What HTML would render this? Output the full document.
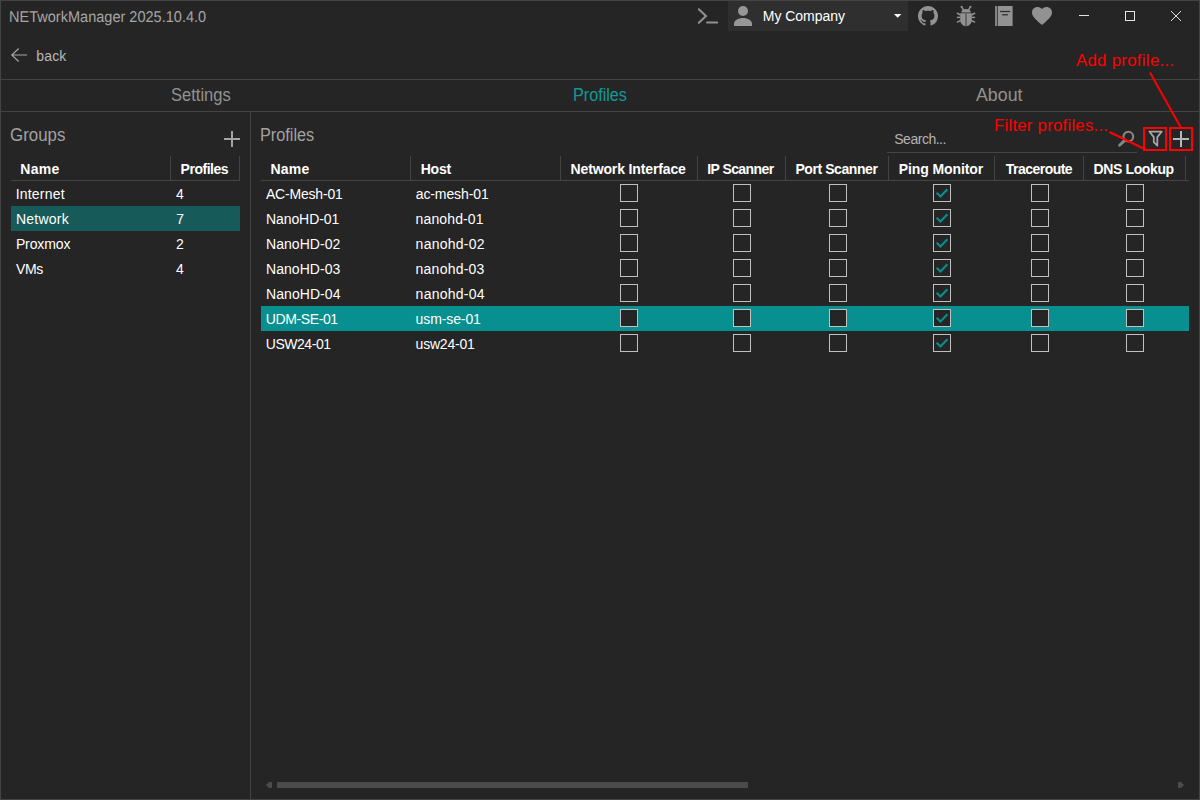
<!DOCTYPE html>
<html>
<head>
<meta charset="utf-8">
<title>NETworkManager</title>
<style>
html,body{margin:0;padding:0;}
body{width:1200px;height:800px;overflow:hidden;background:#252525;font-family:"Liberation Sans",sans-serif;color:#fff;position:relative;}
#win{position:absolute;left:0;top:0;width:1198px;height:798px;border:1px solid #444;background:#252525;}
.t{position:absolute;white-space:nowrap;line-height:20px;height:20px;}
.hl{position:absolute;height:1px;background:#444;}
.vl{position:absolute;width:1px;background:#444;}
.cb{position:absolute;width:16px;height:16px;border:1px solid #c0c0c0;background:#252525;}
.ck{position:absolute;}
svg{position:absolute;overflow:visible;}
</style>
</head>
<body>
<div id="win"></div>

<!-- title bar -->
<div class="t" style="left:8.73px;top:8px;font-size:15.6px;text-rendering:geometricPrecision;transform:scaleX(0.9320);transform-origin:0 0;color:#a6a6a6">NETworkManager 2025.10.4.0</div>
<svg style="left:697px;top:7px" width="22" height="18" viewBox="0 0 22 18"><path d="M1.8 2.2 L9 9 L1.8 15.8" fill="none" stroke="#929292" stroke-width="2" stroke-linecap="round" stroke-linejoin="miter"/><path d="M10 15.5 H20.2" fill="none" stroke="#929292" stroke-width="2" stroke-linecap="round"/></svg>
<div style="position:absolute;left:728px;top:1px;width:180px;height:30px;background:#2f2f2f"></div>
<svg style="left:733px;top:5px" width="20" height="22" viewBox="0 0 20 22"><circle cx="10" cy="6" r="5" fill="#979797"/><path d="M1 21 V19 C1 15.5 5 13 10 13 C15 13 19 15.5 19 19 V21 Z" fill="#979797"/></svg>
<div class="t" style="left:762.78px;top:6px;font-size:14px;letter-spacing:-0.027px;color:#ffffff">My Company</div>
<svg style="left:894px;top:14px" width="8" height="5" viewBox="0 0 8 5"><path d="M0 0 H7.4 L3.7 3.8 Z" fill="#ffffff"/></svg>
<svg style="left:918px;top:6px" width="20" height="20" viewBox="0 0 16 16"><path fill="#929292" d="M8 0C3.58 0 0 3.58 0 8c0 3.54 2.29 6.53 5.47 7.59.4.07.55-.17.55-.38 0-.19-.01-.82-.01-1.49-2.01.37-2.53-.49-2.69-.94-.09-.23-.48-.94-.82-1.13-.28-.15-.68-.52-.01-.53.63-.01 1.08.58 1.23.82.72 1.21 1.87.87 2.33.66.07-.52.28-.87.51-1.07-1.78-.2-3.64-.89-3.64-3.95 0-.87.31-1.59.82-2.15-.08-.2-.36-1.02.08-2.12 0 0 .67-.21 2.2.82.64-.18 1.32-.27 2-.27s1.36.09 2 .27c1.53-1.04 2.2-.82 2.2-.82.44 1.1.16 1.92.08 2.12.51.56.82 1.27.82 2.15 0 3.07-1.87 3.75-3.65 3.95.29.25.54.73.54 1.48 0 1.07-.01 1.93-.01 2.2 0 .21.15.46.55.38A8.01 8.01 0 0 0 16 8c0-4.42-3.58-8-8-8z"/></svg>
<svg style="left:950px;top:2px" width="32" height="28" viewBox="0 0 32 28"><g fill="none" stroke="#929292" stroke-width="1.5"><path d="M13.5 8.2 L11.7 4.9"/><path d="M18.5 8.2 L20.3 4.9"/><path d="M10.6 13 L6.9 11"/><path d="M21.4 13 L25.1 11"/><path d="M10.4 15.4 H6.9"/><path d="M21.6 15.4 H25.1"/><path d="M10.8 18.3 L6.9 20.3"/><path d="M21.2 18.3 L25.1 20.3"/></g><circle cx="11.5" cy="4.7" r="1" fill="#929292"/><circle cx="20.5" cy="4.7" r="1" fill="#929292"/><path d="M11.2 10.5 C11.2 8.3 13.2 7 16 7 C18.8 7 20.8 8.3 20.8 10.5 Z" fill="#929292"/><path d="M10.2 11.3 H21.8 V18 C21.8 21.4 19 24.2 16 24.2 C13 24.2 10.2 21.4 10.2 18 Z" fill="#929292"/><rect x="15.25" y="11.6" width="1.5" height="12.5" fill="#5a5a5a"/></svg>
<svg style="left:995px;top:6px" width="18" height="20" viewBox="0 0 18 20"><rect x="0" y="0" width="2" height="20" fill="#828282"/><rect x="2.7" y="0" width="14.9" height="20" fill="#929292"/><rect x="5.1" y="4.9" width="10" height="1.2" fill="#2c2c2c"/><rect x="7.1" y="8.2" width="5.8" height="1.2" fill="#2c2c2c"/></svg>
<svg style="left:1032px;top:7px" width="20" height="18" viewBox="0 0 20 18"><path fill="#929292" d="M10 18 L8.55 16.7 C3.4 12.1 0 9.1 0 5.4 C0 2.4 2.4 0 5.5 0 C7.2 0 8.9 0.8 10 2.1 C11.1 0.8 12.8 0 14.5 0 C17.6 0 20 2.4 20 5.4 C20 9.1 16.6 12.1 11.45 16.7 Z"/></svg>
<div style="position:absolute;left:1079px;top:15px;width:10px;height:1px;background:#e4e4e4"></div>
<div style="position:absolute;left:1125px;top:11px;width:8px;height:8px;border:1px solid #e4e4e4"></div>
<svg style="left:1171px;top:11px" width="10" height="10" viewBox="0 0 10 10"><path d="M0 0 L10 10 M10 0 L0 10" stroke="#dcdcdc" stroke-width="1" fill="none"/></svg>
<!-- back -->
<svg style="left:11px;top:48px" width="17" height="14" viewBox="0 0 17 14"><path d="M7.7 0.5 L0.8 7 L7.7 13.5 M0.8 7 H16.1" fill="none" stroke="#a8a8a8" stroke-width="1.15"/></svg>
<div class="t" style="left:36.20px;top:46px;font-size:14px;letter-spacing:0.186px;color:#b8b8b8">back</div>
<!-- tabs -->
<div class="hl" style="left:1px;top:79px;width:1198px"></div>
<div class="hl" style="left:1px;top:111px;width:1198px"></div>
<div class="t" style="left:170.70px;top:85px;font-size:18px;transform:scaleX(0.9190);transform-origin:0 0;color:#929292">Settings</div>
<div class="t" style="left:572.55px;top:85px;font-size:18px;transform:scaleX(0.8990);transform-origin:0 0;color:#0f9a98">Profiles</div>
<div class="t" style="left:976.16px;top:85px;font-size:18px;transform:scaleX(0.9880);transform-origin:0 0;color:#929292">About</div>
<div class="vl" style="left:250px;top:112px;height:687px"></div>
<!-- groups panel -->
<div class="t" style="left:10.20px;top:125px;font-size:18px;transform:scaleX(0.9380);transform-origin:0 0;color:#a2a2a2">Groups</div>
<svg style="left:224px;top:131px" width="16" height="16" viewBox="0 0 16 16"><path d="M8 0 V16 M0 8 H16" stroke="#a4a4a4" stroke-width="2" fill="none"/></svg>
<div class="hl" style="left:11px;top:180px;width:229px"></div>
<div class="vl" style="left:170px;top:156px;height:24px"></div>
<div class="vl" style="left:239px;top:156px;height:24px"></div>
<div class="t" style="left:20.20px;top:159px;font-size:14px;font-weight:bold;letter-spacing:0.346px;color:#ffffff">Name</div>
<div class="t" style="left:180.60px;top:159px;font-size:14px;font-weight:bold;letter-spacing:-0.484px;color:#ffffff">Profiles</div>
<div style="position:absolute;left:11px;top:206px;width:229px;height:25px;background:#165b5a"></div>
<div class="t" style="left:15.73px;top:184px;font-size:14px;letter-spacing:0.195px;color:#ffffff">Internet</div>
<div class="t" style="left:15.88px;top:209px;font-size:14px;letter-spacing:0.251px;color:#ffffff">Network</div>
<div class="t" style="left:15.88px;top:234px;font-size:14px;letter-spacing:-0.105px;color:#ffffff">Proxmox</div>
<div class="t" style="left:16.07px;top:259px;font-size:14px;letter-spacing:-0.422px;color:#ffffff">VMs</div>
<div class="t" style="left:176.11px;top:184px;font-size:14px;color:#ffffff">4</div>
<div class="t" style="left:176.20px;top:209px;font-size:14px;color:#ffffff">7</div>
<div class="t" style="left:176.01px;top:234px;font-size:14px;color:#ffffff">2</div>
<div class="t" style="left:176.11px;top:259px;font-size:14px;color:#ffffff">4</div>
<!-- profiles panel -->
<div class="t" style="left:260.10px;top:125px;font-size:18px;transform:scaleX(0.9040);transform-origin:0 0;color:#a2a2a2">Profiles</div>
<div class="t" style="left:894.28px;top:129px;font-size:14px;letter-spacing:-0.489px;color:#b4b4b4">Search...</div>
<div class="hl" style="left:887px;top:152px;width:250px"></div>
<svg style="left:1117px;top:130px" width="18" height="18" viewBox="0 0 18 18"><circle cx="11.3" cy="6.6" r="4.9" fill="none" stroke="#868686" stroke-width="2.1"/><path d="M7.7 10.4 L2.6 15.3" stroke="#868686" stroke-width="2.9" stroke-linecap="round" fill="none"/></svg>
<svg style="left:1144.5px;top:128px" width="21.12" height="21.12" viewBox="0 0 24 24"><path fill="#a8a8a8" d="M15,19.88C15.04,20.18 14.94,20.5 14.71,20.71C14.32,21.1 13.69,21.1 13.3,20.71L9.29,16.7C9.06,16.47 8.96,16.16 9,15.87V10.75L4.21,4.62C3.87,4.19 3.95,3.56 4.38,3.22C4.57,3.08 4.78,3 5,3V3H19V3C19.22,3 19.43,3.08 19.62,3.22C20.05,3.56 20.13,4.19 19.79,4.62L15,10.75V19.88M7.04,5L11,10.06V15.58L13,17.58V10.05L16.96,5H7.04Z"/></svg>
<svg style="left:1173px;top:131px" width="16" height="16" viewBox="0 0 16 16"><path d="M8 0 V16 M0 8 H16" stroke="#b6b6b6" stroke-width="2" fill="none"/></svg>
<div class="hl" style="left:261px;top:180px;width:928px"></div>
<div class="vl" style="left:410px;top:156px;height:24px"></div>
<div class="vl" style="left:560px;top:156px;height:24px"></div>
<div class="vl" style="left:697px;top:156px;height:24px"></div>
<div class="vl" style="left:785px;top:156px;height:24px"></div>
<div class="vl" style="left:888px;top:156px;height:24px"></div>
<div class="vl" style="left:994px;top:156px;height:24px"></div>
<div class="vl" style="left:1083px;top:156px;height:24px"></div>
<div class="vl" style="left:1185px;top:156px;height:24px"></div>
<div class="t" style="left:270.50px;top:159px;font-size:14px;font-weight:bold;letter-spacing:0.233px;color:#ffffff">Name</div>
<div class="t" style="left:420.70px;top:159px;font-size:14px;font-weight:bold;letter-spacing:-0.213px;color:#ffffff">Host</div>
<div class="t" style="left:570.50px;top:159px;font-size:14px;font-weight:bold;letter-spacing:-0.130px;color:#ffffff">Network Interface</div>
<div class="t" style="left:707.30px;top:159px;font-size:14px;font-weight:bold;letter-spacing:-0.584px;color:#ffffff">IP Scanner</div>
<div class="t" style="left:795.40px;top:159px;font-size:14px;font-weight:bold;letter-spacing:-0.420px;color:#ffffff">Port Scanner</div>
<div class="t" style="left:898.80px;top:159px;font-size:14px;font-weight:bold;letter-spacing:-0.103px;color:#ffffff">Ping Monitor</div>
<div class="t" style="left:1005.68px;top:159px;font-size:14px;font-weight:bold;letter-spacing:-0.512px;color:#ffffff">Traceroute</div>
<div class="t" style="left:1093.50px;top:159px;font-size:14px;font-weight:bold;letter-spacing:-0.369px;color:#ffffff">DNS Lookup</div>
<div style="position:absolute;left:261px;top:306px;width:928px;height:25px;background:#07908f"></div>
<div class="t" style="left:265.89px;top:184px;font-size:14px;letter-spacing:-0.181px;color:#ffffff">AC-Mesh-01</div>
<div class="t" style="left:415.78px;top:184px;font-size:14px;letter-spacing:-0.113px;color:#ffffff">ac-mesh-01</div>
<div class="t" style="left:265.98px;top:209px;font-size:14px;letter-spacing:-0.083px;color:#ffffff">NanoHD-01</div>
<div class="t" style="left:415.60px;top:209px;font-size:14px;letter-spacing:0.124px;color:#ffffff">nanohd-01</div>
<div class="t" style="left:265.98px;top:234px;font-size:14px;letter-spacing:0.056px;color:#ffffff">NanoHD-02</div>
<div class="t" style="left:415.60px;top:234px;font-size:14px;letter-spacing:0.248px;color:#ffffff">nanohd-02</div>
<div class="t" style="left:265.98px;top:259px;font-size:14px;letter-spacing:0.051px;color:#ffffff">NanoHD-03</div>
<div class="t" style="left:415.60px;top:259px;font-size:14px;letter-spacing:0.228px;color:#ffffff">nanohd-03</div>
<div class="t" style="left:265.98px;top:284px;font-size:14px;letter-spacing:0.076px;color:#ffffff">NanoHD-04</div>
<div class="t" style="left:415.60px;top:284px;font-size:14px;letter-spacing:0.250px;color:#ffffff">nanohd-04</div>
<div class="t" style="left:265.80px;top:309px;font-size:14px;letter-spacing:-0.393px;color:#ffffff">UDM-SE-01</div>
<div class="t" style="left:415.60px;top:309px;font-size:14px;letter-spacing:-0.110px;color:#ffffff">usm-se-01</div>
<div class="t" style="left:265.80px;top:334px;font-size:14px;letter-spacing:-0.468px;color:#ffffff">USW24-01</div>
<div class="t" style="left:415.60px;top:334px;font-size:14px;letter-spacing:-0.216px;color:#ffffff">usw24-01</div>
<div class="cb" style="left:620px;top:184px"></div>
<div class="cb" style="left:733px;top:184px"></div>
<div class="cb" style="left:829px;top:184px"></div>
<div class="cb" style="left:933px;top:184px"></div>
<svg class="ck" style="left:933px;top:184px" width="18" height="18" viewBox="0 0 18 18"><path d="M3.7 8.7 L7.5 12.5 L14.4 5.2" fill="none" stroke="#088e8d" stroke-width="2.2"/></svg>
<div class="cb" style="left:1031px;top:184px"></div>
<div class="cb" style="left:1126px;top:184px"></div>
<div class="cb" style="left:620px;top:209px"></div>
<div class="cb" style="left:733px;top:209px"></div>
<div class="cb" style="left:829px;top:209px"></div>
<div class="cb" style="left:933px;top:209px"></div>
<svg class="ck" style="left:933px;top:209px" width="18" height="18" viewBox="0 0 18 18"><path d="M3.7 8.7 L7.5 12.5 L14.4 5.2" fill="none" stroke="#088e8d" stroke-width="2.2"/></svg>
<div class="cb" style="left:1031px;top:209px"></div>
<div class="cb" style="left:1126px;top:209px"></div>
<div class="cb" style="left:620px;top:234px"></div>
<div class="cb" style="left:733px;top:234px"></div>
<div class="cb" style="left:829px;top:234px"></div>
<div class="cb" style="left:933px;top:234px"></div>
<svg class="ck" style="left:933px;top:234px" width="18" height="18" viewBox="0 0 18 18"><path d="M3.7 8.7 L7.5 12.5 L14.4 5.2" fill="none" stroke="#088e8d" stroke-width="2.2"/></svg>
<div class="cb" style="left:1031px;top:234px"></div>
<div class="cb" style="left:1126px;top:234px"></div>
<div class="cb" style="left:620px;top:259px"></div>
<div class="cb" style="left:733px;top:259px"></div>
<div class="cb" style="left:829px;top:259px"></div>
<div class="cb" style="left:933px;top:259px"></div>
<svg class="ck" style="left:933px;top:259px" width="18" height="18" viewBox="0 0 18 18"><path d="M3.7 8.7 L7.5 12.5 L14.4 5.2" fill="none" stroke="#088e8d" stroke-width="2.2"/></svg>
<div class="cb" style="left:1031px;top:259px"></div>
<div class="cb" style="left:1126px;top:259px"></div>
<div class="cb" style="left:620px;top:284px"></div>
<div class="cb" style="left:733px;top:284px"></div>
<div class="cb" style="left:829px;top:284px"></div>
<div class="cb" style="left:933px;top:284px"></div>
<svg class="ck" style="left:933px;top:284px" width="18" height="18" viewBox="0 0 18 18"><path d="M3.7 8.7 L7.5 12.5 L14.4 5.2" fill="none" stroke="#088e8d" stroke-width="2.2"/></svg>
<div class="cb" style="left:1031px;top:284px"></div>
<div class="cb" style="left:1126px;top:284px"></div>
<div class="cb" style="left:620px;top:309px"></div>
<div class="cb" style="left:733px;top:309px"></div>
<div class="cb" style="left:829px;top:309px"></div>
<div class="cb" style="left:933px;top:309px"></div>
<svg class="ck" style="left:933px;top:309px" width="18" height="18" viewBox="0 0 18 18"><path d="M3.7 8.7 L7.5 12.5 L14.4 5.2" fill="none" stroke="#088e8d" stroke-width="2.2"/></svg>
<div class="cb" style="left:1031px;top:309px"></div>
<div class="cb" style="left:1126px;top:309px"></div>
<div class="cb" style="left:620px;top:334px"></div>
<div class="cb" style="left:733px;top:334px"></div>
<div class="cb" style="left:829px;top:334px"></div>
<div class="cb" style="left:933px;top:334px"></div>
<svg class="ck" style="left:933px;top:334px" width="18" height="18" viewBox="0 0 18 18"><path d="M3.7 8.7 L7.5 12.5 L14.4 5.2" fill="none" stroke="#088e8d" stroke-width="2.2"/></svg>
<div class="cb" style="left:1031px;top:334px"></div>
<div class="cb" style="left:1126px;top:334px"></div>
<!-- scrollbar -->
<div style="position:absolute;left:277px;top:782px;width:471px;height:6px;background:#4b4b4b"></div>
<svg style="left:266px;top:782px" width="6" height="6" viewBox="0 0 6 6"><path d="M6 0 H3 L0 3 L3 6 H6 Z" fill="#4b4b4b"/></svg>
<svg style="left:1178px;top:782px" width="6" height="6" viewBox="0 0 6 6"><path d="M0 0 H3 L6 3 L3 6 H0 Z" fill="#4b4b4b"/></svg>
<!-- annotations -->
<div class="t" style="left:1075.89px;top:51px;font-size:16.8px;letter-spacing:0.311px;color:#ff0000">Add profile...</div>
<div class="t" style="left:993.97px;top:116px;font-size:16.8px;letter-spacing:0.236px;color:#ff0000">Filter profiles...</div>
<svg style="left:0;top:0" width="1200" height="800" viewBox="0 0 1200 800"><g fill="none" stroke="#ff0000" stroke-width="2"><rect x="1144" y="128" width="22" height="22"/><rect x="1170" y="128" width="22" height="22"/><path d="M1150 72.5 L1180.5 127"/><path d="M1109.5 132 L1143.5 148.5"/></g></svg>
</body>
</html>
